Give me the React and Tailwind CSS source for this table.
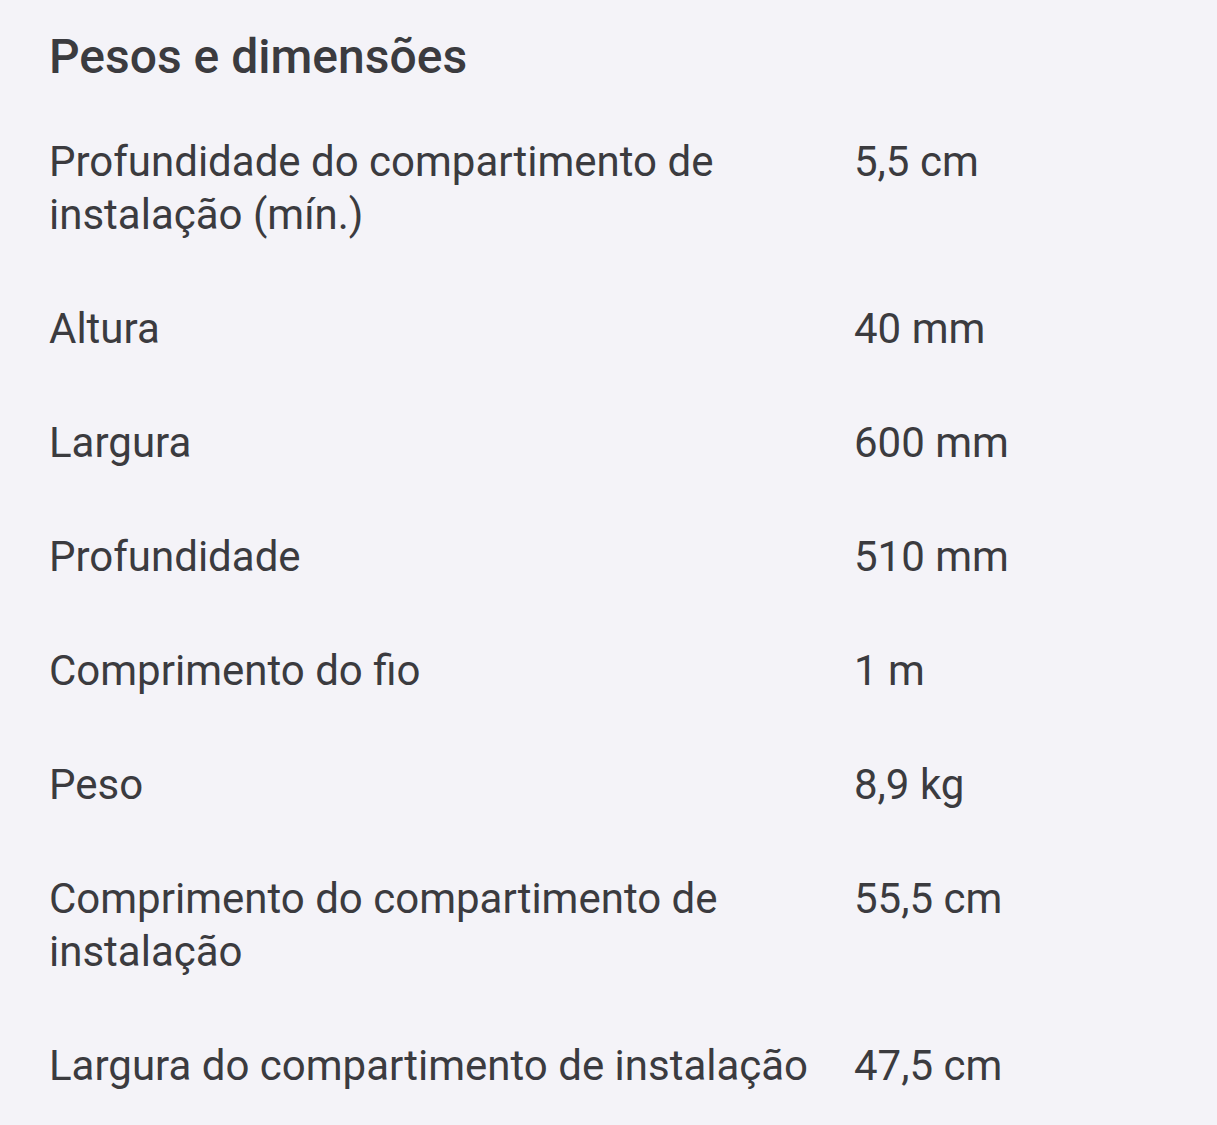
const rows = [
  ["Profundidade do compartimento de instalação (mín.)", "5,5 cm"],
  ["Altura", "40 mm"],
  ["Largura", "600 mm"],
  ["Profundidade", "510 mm"],
  ["Comprimento do fio", "1 m"],
  ["Peso", "8,9 kg"],
  ["Comprimento do compartimento de instalação", "55,5 cm"],
  ["Largura do compartimento de instalação", "47,5 cm"],
];

export default function App() {
  return (
    <div className="min-h-[1125px] w-full bg-[#f4f3f8] text-[#3b3b3f] font-['Roboto',sans-serif] pl-[49px] pr-[40px] pt-[29px]">
      <h2 className="text-[48px] leading-[56px] font-medium">Pesos e dimensões</h2>
      <div className="mt-[50px] grid grid-cols-[781px_1fr] gap-x-[24px] gap-y-[61px] text-[42px] leading-[53px]">
        {rows.map(([label, value]) => (
          <div key={label} className="contents">
            <div>{label}</div>
            <div>{value}</div>
          </div>
        ))}
      </div>
    </div>
  );
}
